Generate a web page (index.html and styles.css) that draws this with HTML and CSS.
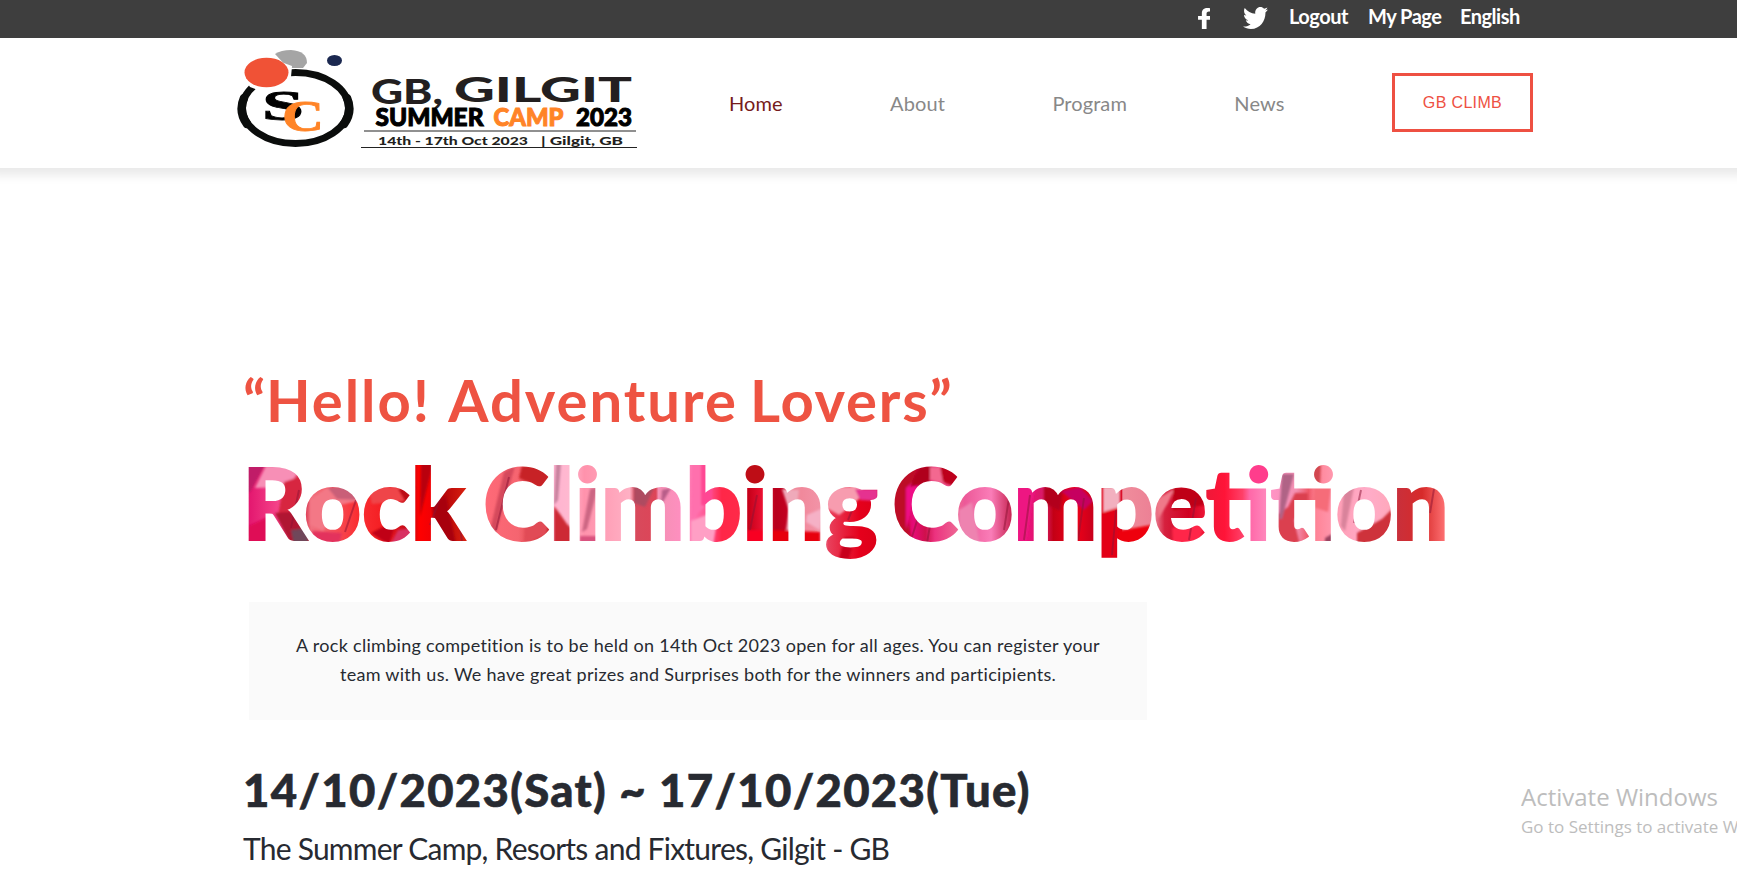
FILE: index.html
```html
<!DOCTYPE html>
<html lang="en">
<head>
<meta charset="utf-8">
<title>GB, Gilgit Summer Camp 2023</title>
<link rel="stylesheet" href="styles.css">
</head>
<body>
<div class="topbar">
  <svg class="icon-fb" viewBox="22 0 256 512" preserveAspectRatio="none"><path fill="#fff" d="M279.14 288l14.22-92.66h-88.91v-60.13c0-25.35 12.42-50.06 52.24-50.06h40.42V6.26S260.43 0 225.36 0c-73.22 0-121.08 44.38-121.08 124.72v70.62H22.89V288h81.39v224h100.17V288z"/></svg>
  <svg class="icon-tw" viewBox="0 48 512 416" preserveAspectRatio="none"><path fill="#fff" d="M459.37 151.716c.325 4.548.325 9.097.325 13.645 0 138.72-105.583 298.558-298.558 298.558-59.452 0-114.68-17.219-161.137-47.106 8.447.974 16.568 1.299 25.34 1.299 49.055 0 94.213-16.568 130.274-44.832-46.132-.975-84.792-31.188-98.112-72.772 6.498.974 12.995 1.624 19.818 1.624 9.421 0 18.843-1.3 27.614-3.573-48.081-9.747-84.143-51.98-84.143-102.985v-1.299c13.969 7.797 30.214 12.67 47.431 13.319-28.264-18.843-46.781-51.005-46.781-87.391 0-19.492 5.197-37.36 14.294-52.954 51.655 63.675 129.3 105.258 216.365 109.807-1.624-7.797-2.599-15.918-2.599-24.04 0-57.828 46.782-104.934 104.934-104.934 30.213 0 57.502 12.67 76.67 33.137 23.715-4.548 46.456-13.32 66.599-25.34-7.798 24.366-24.366 44.833-46.132 57.827 21.117-2.273 41.584-8.122 60.426-16.243-14.292 20.791-32.161 39.308-52.628 54.253z"/></svg>
  <a class="top-link logout">Logout</a>
  <a class="top-link mypage">My Page</a>
  <a class="top-link">English</a>
</div>
<header class="header">
  <svg class="logo" viewBox="236 46 404 106">
    <ellipse cx="295.5" cy="108" rx="53" ry="35.5" fill="none" stroke="#0b0d0c" stroke-width="7"/>
    <path d="M244 98A53 36 0 0 0 247 124M347 98A53 36 0 0 1 344 124" fill="none" stroke="#0b0d0c" stroke-width="8.5" stroke-linecap="round"/>
    <path d="M275 54Q281 50 291 50Q307 51 307 63L303 68H288Z" fill="#a5a5a5"/>
    <path d="M243 76L250 87L258 90L291 77L292 66L262 55Z" fill="#fff"/>
    <ellipse cx="266.5" cy="72.5" rx="22" ry="14.8" fill="#f05236"/>
    <ellipse cx="334.5" cy="60.5" rx="7.5" ry="5.6" fill="#1b2850"/>
    <g class="monogram">
      <text x="262" y="119.5" font-size="43" stroke="#000" textLength="42" lengthAdjust="spacingAndGlyphs">S</text>
      <text x="282" y="130.5" font-size="45" fill="#ff8427" stroke="#ff8427" textLength="42" lengthAdjust="spacingAndGlyphs">C</text>
    </g>
    <g class="wordmark">
      <text x="371" y="104" font-size="35" textLength="72" lengthAdjust="spacingAndGlyphs">GB,</text>
      <text x="454" y="102" font-size="35" textLength="178" lengthAdjust="spacingAndGlyphs">GILGIT</text>
      <text class="camp" x="375.5" y="126" font-size="24.5" textLength="108" lengthAdjust="spacingAndGlyphs">SUMMER</text>
      <text class="camp orange" x="493.5" y="126" font-size="24.5" textLength="70" lengthAdjust="spacingAndGlyphs">CAMP</text>
      <text class="camp" x="576" y="126" font-size="24.5" textLength="56" lengthAdjust="spacingAndGlyphs">2023</text>
      <text class="when" x="378" y="144.5" font-size="12" textLength="150" lengthAdjust="spacingAndGlyphs">14th - 17th Oct 2023</text>
      <text class="when" x="541" y="144.5" font-size="12" textLength="82" lengthAdjust="spacingAndGlyphs">| Gilgit, GB</text>
    </g>
    <path d="M364 131H636M361 147.5H637" stroke="#222" stroke-width="1.2"/>
  </svg>
  <nav class="nav">
    <a class="active">Home</a>
    <a>About</a>
    <a>Program</a>
    <a>News</a>
  </nav>
  <a class="cta">GB CLIMB</a>
</header>
<main class="hero">
  <p class="hello"><span class="quote">“</span>Hello! <span class="second">Adventure</span> <span class="third">Lovers”</span></p>
  <h1 class="title">
    <svg viewBox="244 450 1210 120">
      <defs>
        <linearGradient id="base" gradientUnits="userSpaceOnUse" x1="249" y1="0" x2="1446" y2="0">
          <stop offset="0" stop-color="#e3176f"/><stop offset=".025" stop-color="#f5458a"/><stop offset=".045" stop-color="#d42743"/>
          <stop offset=".052" stop-color="#f0707f"/><stop offset=".09" stop-color="#fa3034"/><stop offset=".115" stop-color="#f31b20"/>
          <stop offset=".135" stop-color="#b80913"/><stop offset=".142" stop-color="#f00"/><stop offset=".155" stop-color="#ee0006"/><stop offset=".16" stop-color="#b00008"/><stop offset=".183" stop-color="#dc2310"/>
          <stop offset=".197" stop-color="#ff6a78"/><stop offset=".225" stop-color="#f56570"/><stop offset=".25" stop-color="#c8262a"/>
          <stop offset=".255" stop-color="#ffb3d0"/><stop offset=".268" stop-color="#ffb9d0"/><stop offset=".28" stop-color="#ff92ac"/><stop offset=".318" stop-color="#ffb0c4"/>
          <stop offset=".323" stop-color="#d84a5c"/><stop offset=".34" stop-color="#dd4558"/><stop offset=".342" stop-color="#f490b4"/><stop offset=".362" stop-color="#ff8fc0"/>
          <stop offset=".372" stop-color="#ff72ae"/><stop offset=".385" stop-color="#ff4e8b"/><stop offset=".395" stop-color="#ff2748"/><stop offset=".41" stop-color="#ff2a48"/>
          <stop offset=".417" stop-color="#c50019"/><stop offset=".43" stop-color="#ee1234"/><stop offset=".44" stop-color="#b8001c"/><stop offset=".449" stop-color="#c20020"/><stop offset=".451" stop-color="#f08294"/><stop offset=".479" stop-color="#f294a8"/>
          <stop offset=".484" stop-color="#e9405c"/><stop offset=".51" stop-color="#e5001c"/><stop offset=".525" stop-color="#dc0018"/>
          <stop offset=".54" stop-color="#c60028"/><stop offset=".555" stop-color="#e60a78"/><stop offset=".565" stop-color="#cf104c"/><stop offset=".573" stop-color="#ec327f"/><stop offset=".592" stop-color="#ee6794"/>
          <stop offset=".598" stop-color="#ec5998"/><stop offset=".62" stop-color="#fa7db8"/><stop offset=".637" stop-color="#c72452"/>
          <stop offset=".644" stop-color="#f40b82"/><stop offset=".665" stop-color="#d51b65"/><stop offset=".672" stop-color="#c30015"/><stop offset=".69" stop-color="#f00018"/><stop offset=".706" stop-color="#c6001c"/>
          <stop offset=".714" stop-color="#e40014"/><stop offset=".729" stop-color="#d9001c"/><stop offset=".73" stop-color="#ef8d9c"/><stop offset=".757" stop-color="#ec7f94"/>
          <stop offset=".765" stop-color="#d6203e"/><stop offset=".785" stop-color="#d00020"/><stop offset=".8" stop-color="#ef1838"/><stop offset=".815" stop-color="#ff1438"/><stop offset=".83" stop-color="#ff4068"/>
          <stop offset=".836" stop-color="#ff68a8"/><stop offset=".855" stop-color="#ff93c4"/><stop offset=".875" stop-color="#f391b2"/><stop offset=".885" stop-color="#ef5868"/>
          <stop offset=".892" stop-color="#ff8598"/><stop offset=".912" stop-color="#ffa0b8"/><stop offset=".935" stop-color="#ffacc8"/><stop offset=".953" stop-color="#ffa8bc"/>
          <stop offset=".958" stop-color="#c8303c"/><stop offset=".98" stop-color="#d72a2a"/><stop offset="1" stop-color="#ff7476"/>
        </linearGradient>
        <pattern id="paint" patternUnits="userSpaceOnUse" x="244" y="450" width="1210" height="120">
          <g transform="translate(-244 -450)">
            <rect x="244" y="450" width="1210" height="120" fill="url(#base)"/>
            <g filter="url(#soften)">
              <path d="M244 460H268L250 492H244Z" fill="#c01c68"/>
              <path d="M266 466H304L287 487L255 488Z" fill="#f78fb6"/>
              <path d="M284 482L308 474V505L278 516Z" fill="#d7253f"/>
              <path d="M244 528L272 515L268 545H244Z" fill="#df0757"/>
              <path d="M275 513L302 511L311 545H291Z" fill="#b01230"/>
              <path d="M291 530L308 528V545H294Z" fill="#70465a"/>
              <path d="M310 500L326 488L362 490V500L340 505L323 531L310 525Z" fill="#f37886"/>
              <path d="M328 488L350 486L364 500L337 499Z" fill="#c95f78"/>
              <path d="M312 531L342 533L339 545H315Z" fill="#e3305d"/>
              <path d="M367 487H413L406 501L372 504Z" fill="#ef4448"/>
              <path d="M398 489L416 487L406 503Z" fill="#bc0814"/>
              <path d="M371 533L397 520L389 545Z" fill="#c00016"/>
              <path d="M398 530L412 528V545H390Z" fill="#d83063"/>
              <path d="M421 460L433 463L420 517Z" fill="#b9000b"/>
              <path d="M432 505L446 496L456 545H436Z" fill="#a80010"/>
              <path d="M504 472L515 466L495 536L490 530Z" fill="#d54a5c"/>
              <path d="M522 466H550L546 490L519 478Z" fill="#c72125"/>
              <path d="M525 520L550 514L546 535L524 543Z" fill="#e14c56"/>
              <path d="M554 506L560 514L567 524L571 528V545H554Z" fill="#cd2934"/>
              <path d="M556 464L561 464L558 500L554 505Z" fill="#c7829e"/>
              <path d="M590 489L598 487L587 529L582 532Z" fill="#cc6683"/>
              <path d="M580 536H598V545H580Z" fill="#d9527f"/>
              <path d="M634 485L654 488L645 507L634 503Z" fill="#ae4b61"/>
              <path d="M662 490L671 488L661 505Z" fill="#b85d88"/>
              <path d="M692 464H709V502L691 520Z" fill="#ff70ad"/>
              <path d="M701 464H712V508L701 505Z" fill="#ff4793"/>
              <path d="M691 521L719 510L713 545H691Z" fill="#ff9fc5"/>
              <path d="M745 464H768V486H745Z" fill="#be0919"/>
              <path d="M747 530H765V545H747Z" fill="#f80020"/>
              <path d="M772 530L820 532V545H772Z" fill="#e70011"/>
              <path d="M782 489L789 510L786 530H794L799 490Z" fill="#efaaba"/>
              <path d="M807 515L823 508L820 530L806 522Z" fill="#f5b1c6"/>
              <path d="M826 488L860 486L865 492L854 504L839 515L825 507Z" fill="#f79caf"/>
              <path d="M855 489H878V501L860 500Z" fill="#e53190"/>
              <path d="M845 537L855 537L848 562H838Z" fill="#c8001c"/>
              <path d="M894 466L919 464L906 505L911 540L894 525Z" fill="#bd0727"/>
              <path d="M906 488L919 476L906 530Z" fill="#ef0e87"/>
              <path d="M919 467L932 465L929 483L910 487Z" fill="#b0001e"/>
              <path d="M930 467H940L944 484L930 480Z" fill="#f36890"/>
              <path d="M940 466H958V488L943 482Z" fill="#bd001d"/>
              <path d="M959 510L972 502L980 545H959Z" fill="#ee83b0"/>
              <path d="M1018 487L1035 487L1026 541H1018Z" fill="#ee1882"/>
              <path d="M1044 487H1063L1060 511L1044 503Z" fill="#b2001b"/>
              <path d="M1061 491L1080 487L1093 501L1084 510Z" fill="#c60060"/>
              <path d="M1103 487H1120V508L1103 515Z" fill="#f2b0bf"/>
              <path d="M1100 513L1120 507V562H1100Z" fill="#e30014"/>
              <path d="M1118 531L1151 525L1144 545H1118Z" fill="#ee0008"/>
              <path d="M1156 500L1175 488L1168 503L1158 519Z" fill="#ef7989"/>
              <path d="M1173 488H1200L1205 505L1173 510Z" fill="#bf0019"/>
              <path d="M1172 528L1205 520L1199 545H1173Z" fill="#ff2848"/>
              <path d="M1247 464H1270V486H1247Z" fill="#ff3d8c"/>
              <path d="M1278 514L1288 507L1295 493H1308V503L1294 520L1300 545H1277Z" fill="#db3f50"/>
              <path d="M1282 474L1294 474L1282 519L1279 519Z" fill="#b06486"/>
              <path d="M1312 464H1321L1320 487H1312Z" fill="#d2464f"/>
              <path d="M1314 488L1331 487L1328 512L1313 507Z" fill="#f66c79"/>
              <path d="M1325 538L1332 534V545H1325Z" fill="#9a4260"/>
              <path d="M1357 533L1382 519L1392 509L1390 545H1357Z" fill="#ce303a"/>
              <path d="M1344 489L1354 487L1345 531L1341 526Z" fill="#d9839b"/>
            </g>
            <path d="M299 490L291 528M356 500L345 532M446 482L430 525M456 500L462 541M509 477L496 530M757 495L750 530M855 503L848 520M922 505L911 540M933 508L927 543M1009 498L1004 530M1030 495L1024 540M1084 498L1078 540M1116 510L1112 555M1196 498L1189 540M1361 490L1354 523M1434 489L1430 513" fill="none" stroke="#8c1134" stroke-opacity=".5" stroke-width="2"/>
          </g>
        </pattern>
        <filter id="soften" x="-5%" y="-5%" width="110%" height="110%"><feGaussianBlur stdDeviation="1"/></filter>
      </defs>
      <g class="title-text" font-size="100" fill="url(#paint)" stroke="url(#paint)">
        <text x="242" y="540" textLength="223">Rock</text>
        <text x="483" y="540" textLength="395">Climbing</text>
        <text x="892" y="540" textLength="557">Competition</text>
      </g>
    </svg>
  </h1>
  <p class="intro">A rock climbing competition is to be held on 14th Oct 2023 open for all ages. You can register your<br>team with us. We have great prizes and Surprises both for the winners and participients.</p>
  <p class="date">14/10/2023(Sat) ~ 17/10/2023(Tue)</p>
  <p class="venue">The Summer Camp, Resorts and Fixtures, Gilgit - GB</p>
</main>
<aside class="watermark">
  <div class="wm-title">Activate Windows</div>
  <div class="wm-sub">Go to Settings to activate Windows.</div>
</aside>
</body>
</html>
```
FILE: styles.css
```css
* { box-sizing: border-box; }
body {
  margin: 0;
  height: 884px;
  overflow: hidden;
  background: #fff;
  color: #272a31;
  font-family: Lato, "Liberation Sans", sans-serif;
}
p, h1 { margin: 0; white-space: nowrap; }

.topbar {
  display: flex;
  height: 38px;
  padding-left: 1198px;
  background: #3e3e3e;
}
.icon-fb { width: 12px; height: 21px; margin: 8px 33px 0 0; }
.icon-tw { width: 25px; height: 22px; margin: 7px 21px 0 0; }
.top-link {
  color: #fff;
  font-size: 20px;
  font-weight: 700;
  line-height: 33px;
  letter-spacing: -0.5px;
}
.logout { width: 79px; }
.mypage { width: 92px; }

.header {
  display: flex;
  align-items: center;
  height: 130px;
  padding-left: 236px;
  background: #fff;
  box-shadow: 0 -3px 10px 10px rgba(0, 0, 0, .09);
  clip-path: inset(0 0 -30px 0);
}
.logo { width: 404px; height: 106px; margin-bottom: 8px; }
.monogram { font-family: "Liberation Serif", serif; font-weight: 700; stroke-width: .8px; }
.wordmark { font-family: Lato, sans-serif; font-weight: 900; fill: #231f20; }
.camp { fill: #000; stroke: #000; stroke-width: 1px; }
.camp.orange { fill: #ff8427; stroke: #ff8427; }
.nav {
  display: flex;
  gap: 107.4px;
  width: 663px;
  margin-left: 89px;
  font-size: 20px;
  line-height: 24px;
  letter-spacing: .1px;
  color: #888;
}
.nav .active { color: #761b1b; }
.cta {
  width: 141px;
  height: 59px;
  margin-bottom: 2px;
  border: 3px solid #ee5042;
  color: #ee5042;
  font: 16px/53px "Liberation Sans", Arial, sans-serif;
  letter-spacing: .35px;
  text-align: center;
}

.hero { padding: 196px 0 0 243px; }
.hello {
  color: #ee5342;
  font-size: 58px;
  font-weight: 700;
  line-height: 72px;
  letter-spacing: 2px;
}
.quote { margin-right: -1.5px; }
.second { margin-left: 1px; }
.third { margin-left: -4px; letter-spacing: 1.8px; }
.title { height: 120px; margin: 14px 0 0 1px; }
.title svg { display: block; width: 1210px; height: 120px; overflow: visible; }
.title-text { font-family: Lato, sans-serif; font-weight: 900; stroke-width: 1.8px; }
.intro {
  width: 898px;
  height: 118px;
  margin: 32px 0 0 6px;
  padding-top: 29px;
  background: #fafafa;
  font-size: 18px;
  line-height: 29px;
  letter-spacing: .29px;
  text-align: center;
}
.date {
  margin-top: 42px;
  font-size: 45.5px;
  font-weight: 900;
  line-height: 56px;
  letter-spacing: 1.32px;
  -webkit-text-stroke: .6px #272a31;
}
.venue {
  margin-top: 12px;
  font-size: 30px;
  line-height: 36px;
  letter-spacing: -0.76px;
}

.watermark {
  position: absolute;
  left: 1521px;
  top: 780px;
  width: 216px;
  overflow: hidden;
  color: #bdbdbd;
  font-family: "Open Sans", "Noto Sans", sans-serif;
  white-space: nowrap;
}
.wm-title { font-size: 24px; line-height: 34px; }
.wm-sub { font-size: 17px; line-height: 26px; }
```
